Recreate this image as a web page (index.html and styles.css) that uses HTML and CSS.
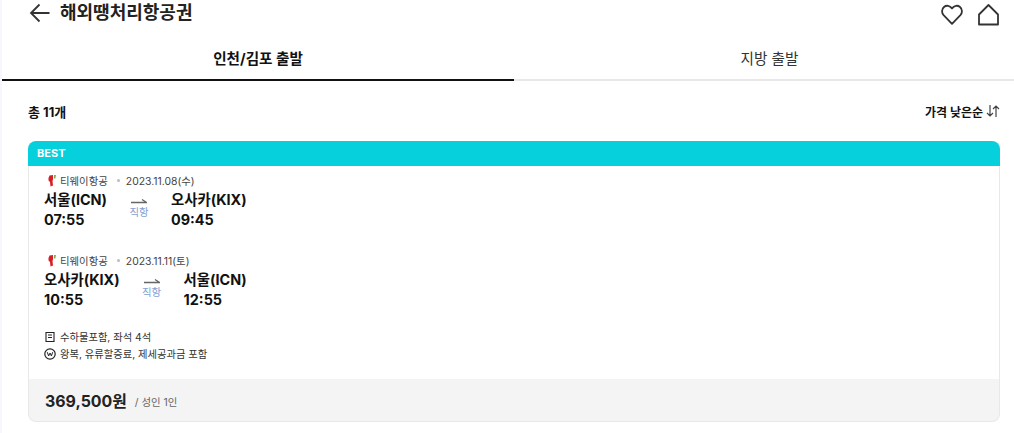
FILE: index.html
```html
<!DOCTYPE html>
<html lang="ko">
<head>
<meta charset="utf-8">
<title>해외땡처리항공권</title>
<link rel="stylesheet" href="styles.css">
</head>
<body>
<div class="page">
  <header class="top">
    <div class="top-left">
      <svg class="back" width="22" height="20" viewBox="0 0 22 20"><path d="M20.500 10H2M10.500 1.500 2 10l8.500 8.500" fill="none" stroke="#333" stroke-width="1.800"/></svg>
      <h1 class="title">해외땡처리항공권</h1>
    </div>
    <div class="top-right">
      <svg width="22" height="21" viewBox="0 0 22 21"><path d="M11 19.800 2.600 11.200C.4 8.800.6 5 3 3 5.400 1 8.800 1.400 11 4.400 13.200 1.400 16.600 1 19 3c2.400 2 2.600 5.800.4 8.200Z" fill="none" stroke="#333" stroke-width="1.800" stroke-linejoin="round"/></svg>
      <svg width="21" height="22" viewBox="0 0 21 22"><path d="M10.500 1 1 10.500V20.500H20V10.500Z" fill="none" stroke="#333" stroke-width="1.800" stroke-linejoin="round"/></svg>
    </div>
  </header>
  <nav class="tabs">
    <div class="tab tab-on">인천/김포 출발</div>
    <div class="tab tab-off">지방 출발</div>
  </nav>
  <main class="content">
    <div class="summary">
      <span class="total">총 11개</span>
      <span class="sort">가격 낮은순
        <svg width="14" height="12" viewBox="0 0 14 12"><path d="M4 0V11M1 8 4 11 7 8M10 12V1M7 4 10 1 13 4" fill="none" stroke="#444" stroke-width="1.200"/></svg>
      </span>
    </div>
    <section class="card">
      <div class="badge">BEST</div>
      <div class="body">
        <div class="leg">
          <div class="meta">
            <svg class="logo" width="10" height="13" viewBox="0 0 10 13"><path d="M1.500 4 2.500 1.500 6 1 6 5 5.500 7.500 6 11.500 3.500 12.500 3 8 1.500 6.500Z" fill="#d5202a"/><path d="M7.200 1h1.600L8.300 4.500H7.200Z" fill="#6a9a2a"/></svg>
            <span class="airline">티웨이항공</span><span class="dot"></span><span>2023.11.08(수)</span>
          </div>
          <div class="route">
            <div class="point"><div>서울(ICN)</div><div class="time">07:55</div></div>
            <div class="direct">
              <svg width="16" height="8" viewBox="0 0 16 8"><path d="M0 6.500H15.500L11 3.500" fill="none" stroke="#666" stroke-width="1.300"/></svg>
              <span>직항</span>
            </div>
            <div class="point"><div>오사카(KIX)</div><div class="time">09:45</div></div>
          </div>
        </div>
        <div class="leg leg-second">
          <div class="meta">
            <svg class="logo" width="10" height="13" viewBox="0 0 10 13"><path d="M1.500 4 2.500 1.500 6 1 6 5 5.500 7.500 6 11.500 3.500 12.500 3 8 1.500 6.500Z" fill="#d5202a"/><path d="M7.200 1h1.600L8.300 4.500H7.200Z" fill="#6a9a2a"/></svg>
            <span class="airline">티웨이항공</span><span class="dot"></span><span>2023.11.11(토)</span>
          </div>
          <div class="route">
            <div class="point"><div>오사카(KIX)</div><div class="time">10:55</div></div>
            <div class="direct">
              <svg width="16" height="8" viewBox="0 0 16 8"><path d="M0 6.500H15.500L11 3.500" fill="none" stroke="#666" stroke-width="1.300"/></svg>
              <span>직항</span>
            </div>
            <div class="point"><div>서울(ICN)</div><div class="time">12:55</div></div>
          </div>
        </div>
        <ul class="notes">
          <li><svg width="12" height="12" viewBox="0 0 12 12"><path d="M2 1.500h8v9H2ZM4 4h4M4 6.500h4" fill="none" stroke="#222" stroke-width="1.100"/></svg>수하물포함, 좌석 4석</li>
          <li><svg width="12" height="12" viewBox="0 0 12 12"><circle cx="6" cy="6" r="5.200" fill="none" stroke="#222" stroke-width="1.200"/><path d="M3.300 4.200 4.600 8 6 5 7.400 8 8.700 4.200" fill="none" stroke="#222" stroke-width="1"/></svg>왕복, 유류할증료, 제세공과금 포함</li>
        </ul>
      </div>
      <div class="price-row">
        <strong class="price">369,500원</strong>
        <span class="per">/ 성인 1인</span>
      </div>
    </section>
  </main>
</div>
</body>
</html>
```
FILE: styles.css
```css
* { box-sizing: border-box; }
html, body { margin: 0; padding: 0; }
body {
  width: 1014px;
  height: 433px;
  overflow: hidden;
  background: #f7f7fd;
  font-family: Inter, "Noto Sans CJK KR", sans-serif;
  color: #111;
}
.page {
  margin-left: 2px;
  height: 433px;
  background: #fff;
}
.top {
  height: 43px;
  display: flex;
  justify-content: space-between;
  align-items: flex-start;
  padding: 3px 15px 0 27px;
}
.top-left { display: flex; align-items: center; gap: 9px; height: 20px; }
.back { display: block; }
.title { margin: 0; font-size: 18px; line-height: 20px; font-weight: 700; color: #222; }
.top-right { display: flex; gap: 15px; align-items: flex-start; padding-top: 1px; }
.top-right svg { display: block; }
.tabs {
  display: flex;
  height: 38px;
  border-bottom: 2px solid #e8e8e8;
}
.tab {
  text-align: center;
  font-size: 14.600px;
  line-height: 32px;
  color: #333;
  height: 38px;
}
.tab-off { flex: 0 0 500px; padding-left: 11px; }
.tab-on {
  flex: 0 0 512px;
  font-weight: 700;
  color: #111;
  border-bottom: 2px solid #111;
}
.content { padding: 0 14px 0 26px; }
.summary {
  display: flex;
  justify-content: space-between;
  align-items: center;
  height: 20px;
  margin-top: 20px;
  font-size: 12px;
  font-weight: 700;
}
.total { font-size: 13px; }
.sort { display: flex; align-items: center; gap: 3px; }
.card {
  margin-top: 20px;
  height: 281px;
  display: flex;
  flex-direction: column;
}
.badge {
  height: 25px;
  background: #06d0dc;
  border-radius: 8px 8px 0 0;
  color: #fff;
  font-size: 11px;
  font-weight: 700;
  line-height: 24px;
  padding-left: 9px;
}
.body {
  flex: 1;
  padding: 7px 0 0 15px;
  border-left: 1px solid #e8e8e8;
  border-right: 1px solid #e8e8e8;
}
.leg-second { margin-top: 23px; }
.meta {
  display: flex;
  align-items: center;
  height: 14px;
  padding-left: 3px;
  font-size: 10.400px;
  color: #444;
}
.logo { margin-right: 3px; }
.dot {
  width: 3px;
  height: 3px;
  margin: 0 6px 0 9px;
  border-radius: 50%;
  background: #bbb;
}
.route {
  display: flex;
  align-items: flex-start;
  margin-top: 3px;
  font-size: 14.400px;
  font-weight: 700;
  line-height: 20px;
}
.direct {
  display: flex;
  flex-direction: column;
  align-items: center;
  gap: 2px;
  width: 64px;
  padding-top: 6px;
  font-size: 10.400px;
  line-height: 14px;
  font-weight: 400;
  color: #86a0d2;
}
.direct svg { display: block; }
.notes {
  list-style: none;
  margin: 18px 0 0;
  padding: 0;
  font-size: 10.300px;
  color: #333;
}
.notes li {
  display: flex;
  align-items: center;
  gap: 4px;
  height: 17px;
}
.price-row {
  height: 43px;
  background: #f4f4f4;
  border: 1px solid #e8e8e8;
  border-top: 0;
  border-radius: 0 0 8px 8px;
  display: flex;
  align-items: center;
  padding-left: 16px;
  gap: 8px;
}
.price { font-size: 15.900px; font-weight: 700; color: #222; }
.per { font-size: 10.400px; color: #666; margin-top: 3px; }
```
